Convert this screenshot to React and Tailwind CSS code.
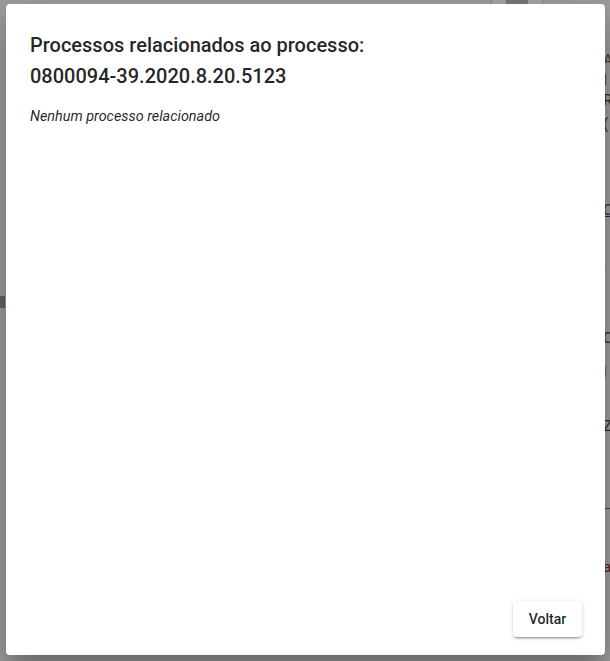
import React from "react";

export default function App() {
  const font = { fontFamily: "Roboto, 'Liberation Sans', sans-serif" };
  return (
    <div className="relative h-[661px] w-[610px] overflow-hidden bg-[#9f9f9f]" style={font}>
      {/* dimmed page behind */}
      <div className="flex h-full flex-col pl-[603px] pt-[50px] text-[15px] leading-[20px] text-[#2a2a2a]">
        <span className="text-[#4a3a2a]">A</span>
        <span className="text-[#1f3f6f]">I</span>
        <span>R</span>
        <span className="mt-[4px]">(</span>
        <span className="mt-[66px] underline text-[#1f3550]">C</span>
        <span className="mt-[40px] text-[#3a6f9f]">·</span>
        <span className="mt-[48px]">C</span>
        <span className="mt-[14px] text-[#8a4f10]">I</span>
        <span className="mt-[34px]">Z</span>
        <span className="mt-[72px] h-px w-[7px] bg-[#444]"></span>
        <span className="mt-[48px] text-[#5a2020]">a</span>
      </div>
      <div className="absolute left-[491px] top-0 h-[6px] w-[52px] border-x border-[#8a8a8a] bg-[#a8a8a8]">
        <div className="mx-auto h-[5px] w-[22px] bg-[#7a7a7a]" />
      </div>
      <div className="absolute left-0 top-[296px] h-[12px] w-[5px] bg-[#6d5f70]" />

      {/* dialog */}
      <div className="absolute left-[6px] top-[4px] flex h-[651px] w-[599px] flex-col rounded-[4px] bg-white shadow-[0_11px_15px_-7px_rgba(0,0,0,0.2),0_24px_38px_3px_rgba(0,0,0,0.14),0_9px_46px_8px_rgba(0,0,0,0.12)]">
        <h2 className="px-[24px] pt-[26px] text-[20px] font-medium leading-[31px] text-[rgba(0,0,0,0.87)]">
          Processos relacionados ao processo:
          <br />
          0800094-39.2020.8.20.5123
        </h2>
        <div className="flex-1 px-[24px] pt-[15px]">
          <p className="text-[14.4px] italic leading-[20px] text-[rgba(0,0,0,0.87)]">Nenhum processo relacionado</p>
        </div>
        <div className="flex justify-end px-[23px] pb-[18px]">
          <button className="h-[36px] w-[69px] rounded-[4px] bg-white text-[14px] font-medium text-[rgba(0,0,0,0.87)] shadow-[0_3px_1px_-2px_rgba(0,0,0,0.2),0_2px_2px_0_rgba(0,0,0,0.14),0_1px_5px_0_rgba(0,0,0,0.12)]">
            Voltar
          </button>
        </div>
      </div>
    </div>
  );
}
